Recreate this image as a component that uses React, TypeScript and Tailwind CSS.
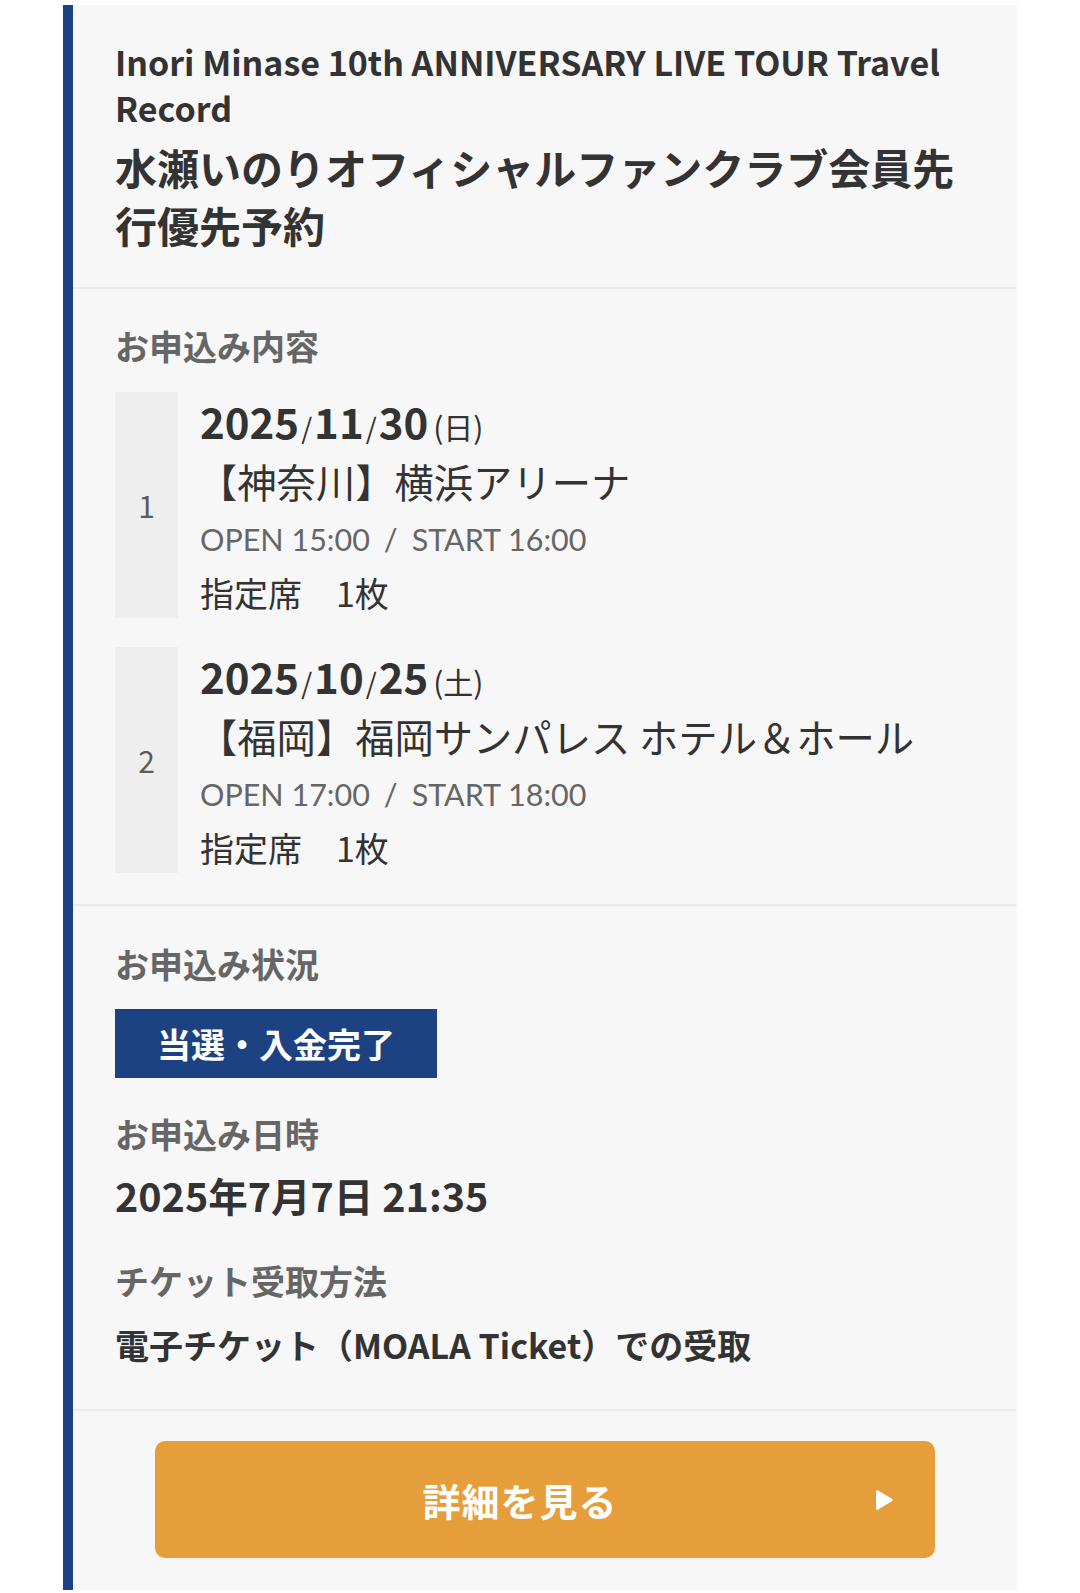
import React from "react";

type Entry = {
  no: number;
  date: [string, string, string];
  dow: string;
  venue: string;
  open: string;
  start: string;
  seat: string;
};

const ENTRIES: Entry[] = [
  {
    no: 1,
    date: ["2025", "11", "30"],
    dow: "日",
    venue: "【神奈川】横浜アリーナ",
    open: "15:00",
    start: "16:00",
    seat: "指定席　1枚",
  },
  {
    no: 2,
    date: ["2025", "10", "25"],
    dow: "土",
    venue: "【福岡】福岡サンパレス ホテル＆ホール",
    open: "17:00",
    start: "18:00",
    seat: "指定席　1枚",
  },
];

function Label({ children }: { children: React.ReactNode }) {
  return <div className="text-[34px] leading-[44px] font-bold text-[#666666]">{children}</div>;
}

function EntryRow({ e }: { e: Entry }) {
  return (
    <div className="flex gap-[22px]">
      <div className="w-[63px] shrink-0 bg-[#eeeeee] flex items-center justify-center text-[30px] text-[#5c5c5c]">
        {e.no}
      </div>
      <div className="min-w-0">
        <div className="flex items-baseline h-[60px] pt-[8px] leading-none text-[#333333] whitespace-nowrap">
          <span className="text-[42px] font-bold">{e.date[0]}</span>
          <span className="text-[28px] mx-[2px]">/</span>
          <span className="text-[42px] font-bold">{e.date[1]}</span>
          <span className="text-[28px] mx-[2px]">/</span>
          <span className="text-[42px] font-bold">{e.date[2]}</span>
          <span className="text-[30px] ml-[5px]">({e.dow})</span>
        </div>
        <div className="text-[39.3px] leading-[58px] text-[#333333] -ml-[2px] whitespace-nowrap">{e.venue}</div>
        <div className="font-['Lato',sans-serif] text-[30.5px] leading-[58px] text-[#666666] whitespace-nowrap">
          OPEN {e.open}
          <span className="mx-[14px]">/</span>
          START {e.start}
        </div>
        <div className="text-[34px] leading-[50px] text-[#333333]">{e.seat}</div>
      </div>
    </div>
  );
}

export default function App() {
  return (
    <div className="min-h-[1593px] bg-white pt-[5px] font-['Noto_Sans_CJK_JP','Noto_Sans',sans-serif]">
      <div className="ml-[63px] w-[954px] h-[1585px] border-l-[10px] border-[#1c4282] bg-[#f7f7f7]">
        <div className="pl-[42px] pr-[42px] pt-[34px] pb-[33px]">
          <div className="text-[34px] leading-[46px] font-bold text-[#333333]">
            Inori Minase 10th ANNIVERSARY LIVE TOUR Travel Record
          </div>
          <div className="mt-[7px] text-[42px] leading-[58px] font-bold text-[#333333]">
            水瀬いのりオフィシャルファンクラブ会員先行優先予約
          </div>
        </div>

        <div className="border-t-2 border-[#ececec] pl-[42px] pr-[42px] pt-[35px] pb-[31px]">
          <Label>お申込み内容</Label>
          <div className="mt-[24px] flex flex-col gap-[29px]">
            {ENTRIES.map((e) => (
              <EntryRow key={e.no} e={e} />
            ))}
          </div>
        </div>

        <div className="border-t-2 border-[#ececec] pl-[42px] pr-[42px] pt-[36px] pb-[40px]">
          <Label>お申込み状況</Label>
          <div className="mt-[23px] inline-flex items-center h-[69px] px-[42px] bg-[#1c4282] text-white text-[34px] font-bold">
            当選・入金完了
          </div>
          <div className="mt-[34px]">
            <Label>お申込み日時</Label>
          </div>
          <div className="mt-[14px] text-[39.5px] leading-[50px] font-bold text-[#333333]">2025年7月7日 21:35</div>
          <div className="mt-[39px]">
            <Label>チケット受取方法</Label>
          </div>
          <div className="mt-[18px] text-[34px] leading-[48px] font-bold text-[#333333]">
            電子チケット（MOALA Ticket）での受取
          </div>
        </div>

        <div className="border-t-2 border-[#ececec] pt-[30px] flex justify-center">
          <button
            type="button"
            className="relative w-[780px] h-[117px] rounded-[10px] bg-[#e69e3a] text-white flex items-center justify-center"
          >
            <span className="mr-[50px] text-[38px] font-bold tracking-[1px]">詳細を見る</span>
            <svg
              className="absolute right-[41px] top-1/2 -translate-y-1/2"
              width="19"
              height="23"
              viewBox="0 0 19 23"
            >
              <path d="M3 2 L17 10.3 Q18.5 11.5 17 12.7 L3 21 Q1 22 1 20 L1 3 Q1 1 3 2 Z" fill="white" />
            </svg>
          </button>
        </div>
      </div>
    </div>
  );
}
